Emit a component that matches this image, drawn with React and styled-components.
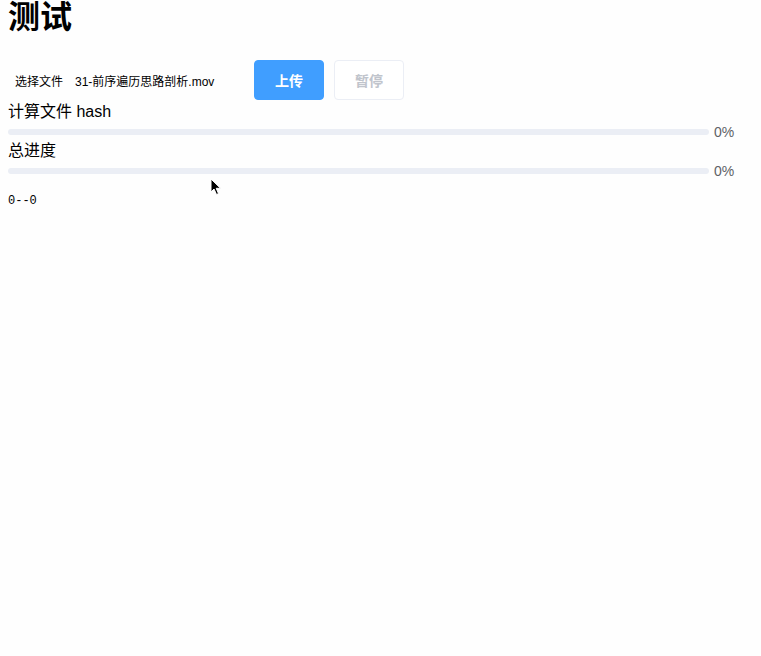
import styled, { createGlobalStyle } from 'styled-components';

const GlobalStyle = createGlobalStyle`
  body {
    margin: 0 8px;
    background: #fefefe;
    font-family: "Liberation Sans", "Noto Sans CJK SC", sans-serif;
    color: #000;
  }
`;

const Page = styled.div`
  position: relative;
  min-height: 656px;
`;

const Title = styled.h1`
  margin: 0;
  font-size: 32px;
  line-height: 34px;
  font-weight: bold;
`;

const Toolbar = styled.div`
  display: flex;
  align-items: center;
  height: 40px;
  margin-top: 26px;
`;

const FilePicker = styled.div`
  display: flex;
  align-items: center;
  gap: 12px;
  width: 239px;
  padding-left: 7px;
  box-sizing: border-box;
  font-size: 12px;
`;

const Button = styled.button`
  width: 70px;
  height: 40px;
  margin-left: ${(p) => (p.$first ? '7px' : '10px')};
  border-radius: 4px;
  border: 1px solid ${(p) => (p.disabled ? '#ebeef5' : '#409eff')};
  background: ${(p) => (p.disabled ? '#fff' : '#409eff')};
  color: ${(p) => (p.disabled ? '#c0c4cc' : '#fff')};
  font-family: "Liberation Sans", "Noto Sans CJK SC", sans-serif;
  font-size: 14px;
  font-weight: bold;
  cursor: ${(p) => (p.disabled ? 'not-allowed' : 'pointer')};
`;

const Label = styled.div`
  font-size: 16px;
  line-height: 22px;
  padding-top: 1px;
`;

const ProgressRow = styled.div`
  display: flex;
  align-items: center;
  height: 14px;
  margin-top: 2px;
`;

const Track = styled.div`
  flex: 1;
  height: 6px;
  border-radius: 100px;
  background: #ebeef5;
  overflow: hidden;
`;

const Fill = styled.div`
  height: 100%;
  background: #409eff;
  border-radius: 100px;
`;

const Percent = styled.span`
  width: 39px;
  margin-left: 5px;
  font-size: 14px;
  line-height: 1;
  color: #606266;
`;

const Status = styled.div`
  margin-top: 14px;
  font-family: "Liberation Mono", monospace;
  font-size: 12px;
  line-height: 18px;
`;

const Pointer = styled.svg`
  position: absolute;
  left: 202px;
  top: 178px;
`;

function Progress({ label, value }) {
  return (
    <>
      <Label>{label}</Label>
      <ProgressRow>
        <Track>
          <Fill style={{ width: `${value}%` }} />
        </Track>
        <Percent>{value}%</Percent>
      </ProgressRow>
    </>
  );
}

export default function App() {
  return (
    <Page>
      <GlobalStyle />
      <Title>测试</Title>
      <Toolbar>
        <FilePicker>
          <span>选择文件</span>
          <span>31-前序遍历思路剖析.mov</span>
        </FilePicker>
        <Button $first>上传</Button>
        <Button disabled>暂停</Button>
      </Toolbar>
      <Progress label="计算文件 hash" value={0} />
      <Progress label="总进度" value={0} />
      <Status>0--0</Status>
      <Pointer width="12" height="18" viewBox="0 0 12 18">
        <path
          d="M1 1 L1 14 L4 11 L6.5 16.5 L8.5 15.6 L6.2 10.3 L10.5 10.3 Z"
          fill="#000"
          stroke="#fff"
          strokeWidth="1"
          strokeLinejoin="round"
        />
      </Pointer>
    </Page>
  );
}
